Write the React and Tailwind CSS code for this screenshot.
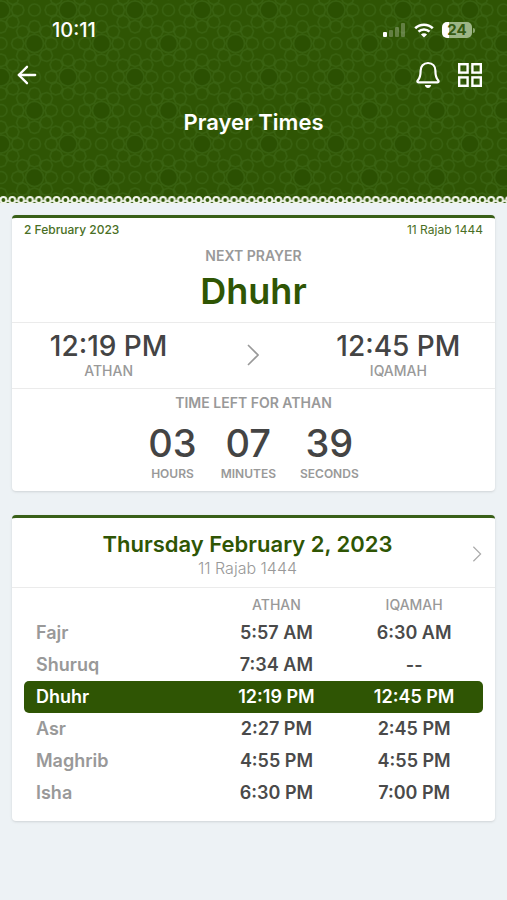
import React from 'react';
import { FiArrowLeft } from 'react-icons/fi';

const prayers = [
  { name: 'Fajr', athan: '5:57 AM', iqamah: '6:30 AM' },
  { name: 'Shuruq', athan: '7:34 AM', iqamah: '--' },
  { name: 'Dhuhr', athan: '12:19 PM', iqamah: '12:45 PM', next: true },
  { name: 'Asr', athan: '2:27 PM', iqamah: '2:45 PM' },
  { name: 'Maghrib', athan: '4:55 PM', iqamah: '4:55 PM' },
  { name: 'Isha', athan: '6:30 PM', iqamah: '7:00 PM' },
];

const countdown = [
  { value: '03', label: 'HOURS' },
  { value: '07', label: 'MINUTES' },
  { value: '39', label: 'SECONDS' },
];

// One rosette of the header pattern: a big disc with eight small rings round it
function Rosette({ x, y }) {
  return (
    <g transform={`translate(${x} ${y})`}>
      <circle r="9" fill="#2b5002" />
      {[0, 45, 90, 135, 180, 225, 270, 315].map((a) => (
        <path
          key={a}
          transform={`rotate(${a})`}
          d="M12 -4.5 L17 -6.2 L21.5 -4 L23 0 L21.5 4 L17 6.2 L12 4.5 L10.5 0 Z"
        />
      ))}
    </g>
  );
}

function HeaderPattern() {
  return (
    <svg className="absolute inset-0 h-full w-full" aria-hidden="true">
      <defs>
        <pattern id="rosettes" x="1" y="10" width="67" height="67" patternUnits="userSpaceOnUse">
          <g fill="none" stroke="#3e6717" strokeWidth="1.6" strokeOpacity="0.6" strokeLinejoin="round">
            <Rosette x={0} y={0} />
            <Rosette x={67} y={0} />
            <Rosette x={0} y={67} />
            <Rosette x={67} y={67} />
            <Rosette x={33.5} y={33.5} />
            <circle cx="33.5" cy="0" r="6" />
            <circle cx="33.5" cy="67" r="6" />
            <circle cx="0" cy="33.5" r="6" />
            <circle cx="67" cy="33.5" r="6" />
          </g>
        </pattern>
      </defs>
      <rect width="100%" height="100%" fill="url(#rosettes)" />
    </svg>
  );
}

function LaceTrim() {
  return (
    <svg className="relative block h-2 w-full" aria-hidden="true">
      <defs>
        <pattern id="lace" x="-1" width="8.87" height="8" patternUnits="userSpaceOnUse">
          <rect y="7" width="9" height="1" fill="#edf2f5" />
          <circle cx="4.4" cy="4" r="2.9" fill="none" stroke="#f1f5ea" strokeWidth="2" />
          <circle cx="0" cy="5" r="1.3" fill="#dfe7d4" />
          <circle cx="8.87" cy="5" r="1.3" fill="#dfe7d4" />
        </pattern>
      </defs>
      <rect width="100%" height="8" fill="url(#lace)" />
    </svg>
  );
}

function StatusIcons() {
  return (
    <div className="flex items-center gap-2">
      <svg width="24" height="16" viewBox="0 0 24 16" fill="#fff" aria-hidden="true">
        <rect x="1" y="10" width="4" height="5" rx="1" />
        <rect x="7" y="8" width="4" height="7" rx="1" opacity="0.25" />
        <rect x="13" y="5" width="4" height="10" rx="1" opacity="0.25" />
        <rect x="19" y="1" width="4" height="14" rx="1" opacity="0.25" />
      </svg>
      <svg width="20" height="15" viewBox="0 0 20 15" fill="none" stroke="#fff" strokeWidth="2.6" aria-hidden="true">
        <path d="M1.2 5.3 A12.6 12.6 0 0 1 18.8 5.3" />
        <path d="M4.5 8.7 A7.8 7.8 0 0 1 15.5 8.7" />
        <path d="M10 14.6 L6.9 11.5 A4.4 4.4 0 0 1 13.1 11.5 Z" fill="#fff" stroke="none" />
      </svg>
      <div className="flex items-center gap-px">
        <div className="h-4 w-[30px] rounded-[5px] bg-linear-to-r from-white from-25% to-[#9db586] to-25% text-center text-[15px] leading-4 font-bold text-[#365a12]">
          24
        </div>
        <div className="h-[5px] w-[2px] rounded-r-full bg-[#8aa56f]" />
      </div>
    </div>
  );
}

function BellIcon() {
  return (
    <svg width="26" height="28" viewBox="0 0 26 28" fill="none" stroke="#fff" strokeWidth="2.2" strokeLinejoin="round" aria-hidden="true">
      <path d="M13 2 C8.4 2 5.6 5.3 5.6 9.8 C5.6 15.6 4.6 17.4 2.9 19.3 C2 20.4 2.2 21.3 3.5 21.3 H22.5 C23.8 21.3 24 20.4 23.1 19.3 C21.4 17.4 20.4 15.6 20.4 9.8 C20.4 5.3 17.6 2 13 2 Z" />
      <path d="M9.8 24 H16.2 C15.8 25.9 14.6 27 13 27 C11.4 27 10.2 25.9 9.8 24 Z" fill="#fff" stroke="none" />
    </svg>
  );
}

function GridIcon() {
  return (
    <svg width="26" height="26" viewBox="0 0 26 26" fill="none" stroke="#fff" strokeWidth="2.4" aria-hidden="true">
      <rect x="2.2" y="2.2" width="8.4" height="8.4" />
      <rect x="15.4" y="2.2" width="8.4" height="8.4" />
      <rect x="2.2" y="15.4" width="8.4" height="8.4" />
      <rect x="15.4" y="15.4" width="8.4" height="8.4" />
    </svg>
  );
}

function Chevron({ className }) {
  return (
    <svg className={className} viewBox="0 0 12 22" fill="none" stroke="currentColor" strokeWidth="1.6" aria-hidden="true">
      <path d="M1 1 L11 11 L1 21" />
    </svg>
  );
}

function Header() {
  return (
    <header className="relative bg-[#2f5504] text-white">
      <HeaderPattern />
      <div className="relative flex h-[196px] flex-col">
        <div className="flex items-center justify-between pt-5 pr-8 pl-[52px]">
          <span className="text-xl leading-5 font-medium">10:11</span>
          <StatusIcons />
        </div>
        <div className="mt-5 flex items-center justify-between px-3">
          <button type="button" aria-label="Back" className="p-px">
            <FiArrowLeft size={28} strokeWidth={2} />
          </button>
          <div className="flex items-center gap-4 pr-3">
            <button type="button" aria-label="Notifications">
              <BellIcon />
            </button>
            <button type="button" aria-label="Menu">
              <GridIcon />
            </button>
          </div>
        </div>
        <h1 className="mt-4 text-center text-[22px] leading-8 font-semibold">Prayer Times</h1>
      </div>
      <LaceTrim />
    </header>
  );
}

function PrayerTime({ time, label }) {
  return (
    <div className="w-2/5 text-center">
      <p className="text-[28px] leading-8 font-medium text-[#444]">{time}</p>
      <p className="text-sm leading-[18px] font-medium text-[#999]">{label}</p>
    </div>
  );
}

function NextPrayerCard() {
  return (
    <section className="rounded-[4px] border-t-3 border-[#396018] bg-white shadow-sm">
      <div className="flex justify-between px-3 pt-1 text-xs leading-4 text-[#4a6f25]">
        <span className="font-medium">2 February 2023</span>
        <span>11 Rajab 1444</span>
      </div>
      <div className="border-b border-[#ebebeb] pt-2 pb-[9px] text-center">
        <p className="text-sm leading-5 font-semibold text-[#999]">NEXT PRAYER</p>
        <h2 className="mt-[3px] text-4xl leading-11 font-semibold text-[#2f5504]">Dhuhr</h2>
      </div>
      <div className="flex items-center border-b border-[#ebebeb] pt-[7px] pb-2">
        <PrayerTime time="12:19 PM" label="ATHAN" />
        <div className="flex w-1/5 justify-center text-[#999]">
          <Chevron className="h-[22px] w-3" />
        </div>
        <PrayerTime time="12:45 PM" label="IQAMAH" />
      </div>
      <div className="pt-1 pb-[9px] text-center">
        <p className="text-sm leading-5 font-semibold text-[#999]">TIME LEFT FOR ATHAN</p>
        <div className="mt-[7px] flex justify-center gap-6">
          {countdown.map((item) => (
            <div key={item.label}>
              <p className="text-[38px] leading-[46px] font-medium text-[#444]">{item.value}</p>
              <p className="text-xs leading-4 font-semibold text-[#999]">{item.label}</p>
            </div>
          ))}
        </div>
      </div>
    </section>
  );
}

function DayCard() {
  return (
    <section className="rounded-[4px] border-t-3 border-[#396018] bg-white shadow-sm">
      <div className="flex items-center border-b border-[#ebebeb] pt-3 pr-3 pb-[9px] pl-3">
        <div className="flex-1 text-center">
          <h2 className="text-[22px] leading-7 font-semibold text-[#2f5504]">Thursday February 2, 2023</h2>
          <p className="text-base leading-5 font-light text-[#999]">11 Rajab 1444</p>
        </div>
        <button type="button" aria-label="Next day" className="text-[#aaa]">
          <Chevron className="h-4 w-3" />
        </button>
      </div>
      <div className="px-3 pt-1 pb-3">
        <table className="w-full table-fixed border-separate border-spacing-0 text-center text-lg font-semibold">
          <thead>
            <tr className="h-[25px] text-sm text-[#999]">
              <td className="w-2/5"></td>
              <th scope="col" className="font-medium">ATHAN</th>
              <th scope="col" className="font-medium">IQAMAH</th>
            </tr>
          </thead>
          <tbody>
            {prayers.map((prayer) => (
              <tr key={prayer.name} className={`h-8 leading-6 ${prayer.next ? 'text-white' : 'text-[#4a4a4a]'}`}>
                <th
                  scope="row"
                  className={`rounded-l-[5px] pl-3 text-left font-semibold ${prayer.next ? 'bg-[#2f5504]' : 'text-[#999]'}`}
                >
                  {prayer.name}
                </th>
                <td className={prayer.next ? 'bg-[#2f5504]' : ''}>{prayer.athan}</td>
                <td className={`rounded-r-[5px] ${prayer.next ? 'bg-[#2f5504]' : ''}`}>{prayer.iqamah}</td>
              </tr>
            ))}
          </tbody>
        </table>
      </div>
    </section>
  );
}

function App() {
  return (
    <div className="min-h-screen bg-[#edf2f5] font-[Inter,sans-serif]">
      <Header />
      <main className="flex flex-col gap-6 px-3 pt-[11px] pb-6">
        <NextPrayerCard />
        <DayCard />
      </main>
    </div>
  );
}

export default App;
